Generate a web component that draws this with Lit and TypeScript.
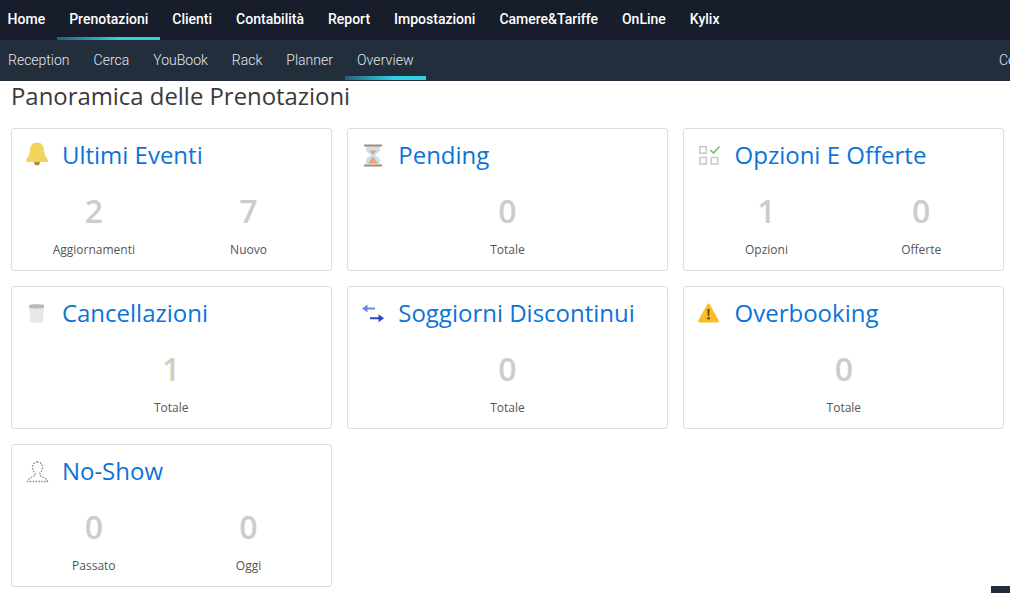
import { LitElement, html, css, svg } from "lit";
import { customElement } from "lit/decorators.js";

const icons: Record<string, unknown> = {
  bell: svg`<path d="M11 -1.500c-4.700 0-6.700 3.400-7 7.600-.3 4-1.100 6.500-3.400 8.800-1.400 1.500-.7 3.100 1.100 3.100h18.600c1.800 0 2.500-1.600 1.100-3.100-2.300-2.300-3.100-4.800-3.400-8.800-.3-4.200-2.300-7.600-7-7.600z" fill="#f2d35c"/><path d="M8 18h6c0 2-1.200 3.400-3 3.400S8 20 8 18z" fill="#b08f2b"/>`,
  glass: svg`<path d="M4 2h14v3.500c0 3-4.700 4.300-4.700 5.500s4.700 2.500 4.700 5.500V20H4v-3.500C4 13.500 8.700 12.200 8.700 11S4 8.500 4 5.500z" fill="#c6e0f5"/><path d="M7 6.500h8l-4 4zM11 12.500l5 7H6z" fill="#eda36c"/><rect x="2" y="0.500" width="18" height="2" fill="#a98a72"/><rect x="2" y="20.500" width="18" height="2" fill="#a98a72"/>`,
  options: svg`<g fill="none" stroke="#c9c9c9" stroke-width="1.500"><rect x="1.800" y="2.700" width="6.500" height="6.500"/><rect x="1.800" y="13.500" width="6.500" height="6.500"/><rect x="13.300" y="13.500" width="6.500" height="6.500"/></g><path d="M12.500 6l3 3 6-6.500" fill="none" stroke="#6cc070" stroke-width="1.600"/>`,
  bin: svg`<path d="M3 4h15l-1 15.500c0 .6-.8 1-1.500 1h-10c-.7 0-1.500-.4-1.500-1z" fill="#e8e8e8"/><path d="M3 3.200c1-1.200 14-1.200 15 0v2.600c-1 1-14 1-15 0z" fill="#b9b9b9"/>`,
  arrows: svg`<path d="M5.500 2.500v3h7.500v2H5.500v3L0 6.500z" fill="#6f84e8"/><path d="M16.500 12.200v3H8v2h8.500v3l5.500-4z" fill="#2f45c9"/>`,
  warn: svg`<path d="M10.500 1.500c.6 0 1.100.3 1.400.9l8.800 16.200c.4.900-.2 1.900-1.100 1.900H1.400c-.9 0-1.500-1-1.100-1.900L9.100 2.400c.3-.6.800-.9 1.400-.9z" fill="#fbbc2c"/><path d="M9.400 7h2.200l-.4 7h-1.400z" fill="#5c4a16"/><circle cx="10.500" cy="16.300" r="1.300" fill="#5c4a16"/>`,
  user: svg`<g fill="none" stroke="#7f8f9a" stroke-width="1.300" stroke-dasharray="1.600 1.300"><path d="M11.500 2c-3 0-5 2.300-5 5.200 0 2.700 1 4.400 2.500 5.800v2.500c-1.500 1.200-6.500 2-7.500 6h20c-1-4-6-4.800-7.500-6V13c1.500-1.400 2.500-3.100 2.500-5.800C16.500 4.300 14.500 2 11.500 2z"/></g>`,
};

type Stat = [string, string];
const cards: { icon: string; title: string; stats: Stat[]; warm?: boolean }[] = [
  { icon: "bell", title: "Ultimi Eventi", stats: [["2", "Aggiornamenti"], ["7", "Nuovo"]] },
  { icon: "glass", title: "Pending", stats: [["0", "Totale"]] },
  { icon: "options", title: "Opzioni E Offerte", stats: [["1", "Opzioni"], ["0", "Offerte"]] },
  { icon: "bin", title: "Cancellazioni", stats: [["1", "Totale"]], warm: true },
  { icon: "arrows", title: "Soggiorni Discontinui", stats: [["0", "Totale"]] },
  { icon: "warn", title: "Overbooking", stats: [["0", "Totale"]] },
  { icon: "user", title: "No-Show", stats: [["0", "Passato"], ["0", "Oggi"]] },
];

const mainNav = ["Home", "Prenotazioni", "Clienti", "Contabilità", "Report", "Impostazioni", "Camere&Tariffe", "OnLine", "Kylix"];
const subNav = ["Reception", "Cerca", "YouBook", "Rack", "Planner", "Overview"];

@customElement("app-root")
export class AppRoot extends LitElement {
  static styles = css`
    :host { display: block; height: 593px; overflow: hidden; background: #fff; position: relative; font-family: "Open Sans", sans-serif; }
    .main { display: flex; height: 40px; background: #171d2b; padding-left: 7.6px; }
    .main a { position: relative; display: flex; align-items: center; padding: 0 12px; height: 37px; font: 500 14px Roboto, sans-serif; color: #fff; white-space: nowrap; }
    .main a:first-child { padding-left: 0; }
    .main a.on::after, .sub a.on::after { content: ""; position: absolute; left: 0; right: 0; background: linear-gradient(90deg, #27627a, #2fd0e4 60%); }
    .main a.on::after { top: 37px; height: 3px; }
    .sub { display: flex; height: 41px; background: #232e3d; padding-left: 8px; justify-content: flex-start; }
    .sub a { position: relative; display: flex; align-items: center; padding: 0 12px; height: 40px; font: 300 14px Roboto, sans-serif; color: #e4e7ea; white-space: nowrap; }
    .sub a:first-child { padding-left: 0; }
    .sub a.on { letter-spacing: 0.1px; }
    .sub a.on::after { top: 36px; height: 4px; }
    .sub .cut { margin-left: auto; width: 11px; padding: 0; overflow: hidden; }
    h1 { margin: 0; padding: 0 0 0 11px; font-size: 23.9px; font-weight: 400; line-height: 30px; color: #3a3a3a; height: 47px; }
    .grid { display: grid; grid-template-columns: repeat(3, 321.33px); gap: 15px; padding-left: 10.5px; }
    .card { box-sizing: border-box; height: 143px; border: 1px solid #ddd; border-radius: 3px; background: #fff; }
    .head { display: flex; align-items: center; height: 53px; padding-left: 14px; }
    .head svg { width: 24px; height: 24px; flex: none; overflow: visible; }
    .head span { margin: -2px 0 0 12.4px; font-size: 24px; line-height: 52px; color: #0b74d9; white-space: nowrap; }
    .stats { display: flex; padding: 0 5px; }
    .stat { flex: 1; text-align: center; }
    .num { font-size: 32px; font-weight: 600; line-height: 58px; color: #ccc; }
    .warm .num { color: #d3ccc3; }
    .lab { font-size: 12px; line-height: 20px; color: #555; }
    .corner { position: absolute; right: 0; bottom: 0; width: 19px; height: 7px; background: #232e3d; }
  `;

  render() {
    return html`
      <nav class="main">${mainNav.map((n) => html`<a class=${n === "Prenotazioni" ? "on" : ""}>${n}</a>`)}</nav>
      <nav class="sub">
        ${subNav.map((n) => html`<a class=${n === "Overview" ? "on" : ""}>${n}</a>`)}
        <a class="cut">Cerca</a>
      </nav>
      <h1>Panoramica delle Prenotazioni</h1>
      <div class="grid">
        ${cards.map((c) => html`
          <section class="card ${c.warm ? "warm" : ""}">
            <div class="head"><svg viewBox="0 0 24 24">${icons[c.icon]}</svg><span>${c.title}</span></div>
            <div class="stats">
              ${c.stats.map((s) => html`<div class="stat"><div class="num">${s[0]}</div><div class="lab">${s[1]}</div></div>`)}
            </div>
          </section>`)}
      </div>
      <div class="corner"></div>
    `;
  }
}
